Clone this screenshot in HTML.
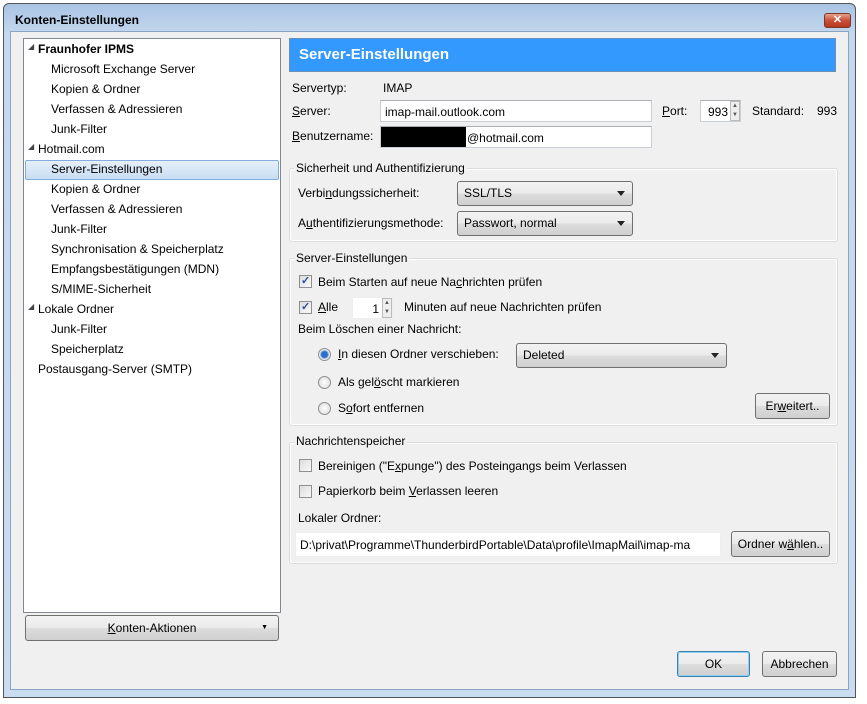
<!DOCTYPE html>
<html><head><meta charset="utf-8"><style>
*{box-sizing:border-box;margin:0;padding:0}
body{width:867px;height:704px;background:#fff;position:relative;font-family:"Liberation Sans",sans-serif;font-size:12px;color:#000;overflow:hidden}
.a{position:absolute;white-space:nowrap}
.win{position:absolute;left:3px;top:3px;width:853px;height:695px;background:linear-gradient(#a9c4e4,#c4d8ee 30px,#c9dcf0);border:1px solid #555;border-radius:6px 6px 0 0}
.cont{position:absolute;left:10px;top:31px;width:839px;height:659px;background:#f0f0f0;border:1px solid #8aa4c4}
.inp{position:absolute;background:#fff;border:1px solid #c9ced6;border-top-color:#abadb3}
.btn{position:absolute;border:1px solid #707070;border-radius:3px;background:linear-gradient(#f2f2f2,#ebebeb 50%,#dddddd 51%,#cfcfcf);text-align:center}
.sel{position:absolute;border:1px solid #707070;border-radius:3px;background:linear-gradient(#f2f2f2,#ebebeb 50%,#dddddd 51%,#cfcfcf);padding-left:6px;line-height:22px}
.sel:after{content:"";position:absolute;right:7px;top:9px;border:4px solid transparent;border-top:5px solid #222;border-bottom:0}
.grp{position:absolute;border:1px solid #dcdcdc;border-radius:3px;box-shadow:inset 0 0 0 1px #fff}
.lg{position:absolute;background:#f0f0f0;padding:0 2px}
.cb{position:absolute;width:13px;height:13px;border:1px solid #8f8f8f;background:linear-gradient(135deg,#dcdcdc,#fafafa)}
.cb.on:after{content:"✓";position:absolute;left:1px;top:-2px;font-size:11px;color:#2b4e9e;font-weight:bold}
.rd{position:absolute;width:13px;height:13px;border:1px solid #8f8f8f;border-radius:50%;background:radial-gradient(#fff,#d8d8d8)}
.rd.on{background:radial-gradient(#2a6fc9 0 3px,#9cc0ea 4px,#eee 5px)}
.tree div{position:absolute;white-space:nowrap}
u{text-decoration:underline}
</style></head><body>
<div class="win"></div>
<div class="a" style="left:15px;top:13px;font-weight:bold;font-size:12px">Konten-Einstellungen</div>
<div class="a" style="left:824px;top:13px;width:27px;height:15px;border:1px solid #7a3a2a;border-radius:3px;background:linear-gradient(#e8a08a,#c8503a 50%,#b8381f);color:#fff;font-size:11px;text-align:center;line-height:13px;font-weight:bold">✕</div>
<div class="cont"></div>

<div class="a tree" style="left:23px;top:38px;width:258px;height:575px;background:#fff;border:1px solid #828790">
<div style="left:1px;top:121px;width:254px;height:20px;background:linear-gradient(#e6f0fa,#c8ddf3);border:1px solid #84acdd;border-radius:2px"></div>
<div style="left:4px;top:3px;font-size:8px;color:#444">◢</div><div style="left:14px;top:3px;font-weight:bold">Fraunhofer IPMS</div>
<div style="left:27px;top:23px">Microsoft Exchange Server</div>
<div style="left:27px;top:43px">Kopien &amp; Ordner</div>
<div style="left:27px;top:63px">Verfassen &amp; Adressieren</div>
<div style="left:27px;top:83px">Junk-Filter</div>
<div style="left:4px;top:103px;font-size:8px;color:#444">◢</div><div style="left:14px;top:103px">Hotmail.com</div>
<div style="left:27px;top:123px">Server-Einstellungen</div>
<div style="left:27px;top:143px">Kopien &amp; Ordner</div>
<div style="left:27px;top:163px">Verfassen &amp; Adressieren</div>
<div style="left:27px;top:183px">Junk-Filter</div>
<div style="left:27px;top:203px">Synchronisation &amp; Speicherplatz</div>
<div style="left:27px;top:223px">Empfangsbestätigungen (MDN)</div>
<div style="left:27px;top:243px">S/MIME-Sicherheit</div>
<div style="left:4px;top:263px;font-size:8px;color:#444">◢</div><div style="left:14px;top:263px">Lokale Ordner</div>
<div style="left:27px;top:283px">Junk-Filter</div>
<div style="left:27px;top:303px">Speicherplatz</div>
<div style="left:14px;top:323px">Postausgang-Server (SMTP)</div>
</div>
<div class="btn" style="left:25px;top:615px;width:254px;height:26px;line-height:24px"><u>K</u>onten-Aktionen<span style="position:absolute;right:10px;font-size:7px">▼</span></div>

<div class="a" style="left:289px;top:38px;width:547px;height:34px;background:#3399ff;border:1px solid #6a8fb8;color:#fff;font-weight:bold;font-size:15px;line-height:32px;padding-left:9px">Server-Einstellungen</div>

<div class="a" style="left:292px;top:81px">Servertyp:</div>
<div class="a" style="left:383px;top:81px">IMAP</div>
<div class="a" style="left:292px;top:104px"><u>S</u>erver:</div>
<div class="inp" style="left:380px;top:100px;width:272px;height:22px;padding:4px 4px">imap-mail.outlook.com</div>
<div class="a" style="left:662px;top:104px"><u>P</u>ort:</div>
<div class="inp" style="left:700px;top:100px;width:41px;height:22px;padding:4px 12px 0 0;text-align:right">993</div>
<div class="a" style="left:730px;top:101px;width:10px;height:20px;border:1px solid #bbb;background:#eee;font-size:6px;line-height:9px;text-align:center;color:#555">▲<br>▼</div>
<div class="a" style="left:752px;top:104px">Standard:</div>
<div class="a" style="left:817px;top:104px">993</div>
<div class="a" style="left:292px;top:129px"><u>B</u>enutzername:</div>
<div class="inp" style="left:380px;top:126px;width:272px;height:22px;padding:4px 0 0 86px">@hotmail.com</div>
<div class="a" style="left:381px;top:127px;width:85px;height:20px;background:#000"></div>

<div class="grp" style="left:289px;top:168px;width:549px;height:74px"></div>
<div class="lg a" style="left:294px;top:161px">Sicherheit und Authentifizierung</div>
<div class="a" style="left:298px;top:186px">Verbi<u>n</u>dungssicherheit:</div>
<div class="sel" style="left:457px;top:181px;width:176px;height:25px">SSL/TLS</div>
<div class="a" style="left:298px;top:216px">A<u>u</u>thentifizierungsmethode:</div>
<div class="sel" style="left:457px;top:211px;width:176px;height:25px">Passwort, normal</div>

<div class="grp" style="left:289px;top:258px;width:549px;height:168px"></div>
<div class="lg a" style="left:294px;top:251px">Server-Einstellungen</div>
<div class="cb on" style="left:299px;top:275px"></div>
<div class="a" style="left:318px;top:275px">Beim Starten auf neue Na<u>c</u>hrichten prüfen</div>
<div class="cb on" style="left:299px;top:301px"></div>
<div class="a" style="left:318px;top:300px"><u>A</u>lle</div>
<div class="inp" style="left:352px;top:297px;width:41px;height:22px;padding:4px 13px 0 0;text-align:right;border-color:#eee">1</div>
<div class="a" style="left:382px;top:298px;width:10px;height:20px;border:1px solid #bbb;background:#eee;font-size:6px;line-height:9px;text-align:center;color:#555">▲<br>▼</div>
<div class="a" style="left:404px;top:300px">Minuten auf neue Nachrichten prüfen</div>
<div class="a" style="left:298px;top:322px">Beim Löschen einer Nachricht:</div>
<div class="rd on" style="left:318px;top:348px"></div>
<div class="a" style="left:338px;top:347px"><u>I</u>n diesen Ordner verschieben:</div>
<div class="sel" style="left:516px;top:343px;width:211px;height:25px">Deleted</div>
<div class="rd" style="left:318px;top:376px"></div>
<div class="a" style="left:338px;top:375px">Als gel<u>ö</u>scht markieren</div>
<div class="rd" style="left:318px;top:402px"></div>
<div class="a" style="left:338px;top:401px">S<u>o</u>fort entfernen</div>
<div class="btn" style="left:755px;top:393px;width:75px;height:26px;line-height:24px">Er<u>w</u>eitert..</div>

<div class="grp" style="left:289px;top:442px;width:549px;height:122px"></div>
<div class="lg a" style="left:294px;top:434px">Nachrichtenspeicher</div>
<div class="cb" style="left:299px;top:459px"></div>
<div class="a" style="left:318px;top:459px">Bereinigen ("E<u>x</u>punge") des Posteingangs beim Verlassen</div>
<div class="cb" style="left:299px;top:485px"></div>
<div class="a" style="left:318px;top:484px">Papierkorb beim <u>V</u>erlassen leeren</div>
<div class="a" style="left:298px;top:511px">Lokaler Ordner:</div>
<div class="inp" style="left:295px;top:532px;width:426px;height:25px;padding:5px 4px;overflow:hidden;border-color:#eee">D:\privat\Programme\ThunderbirdPortable\Data\profile\ImapMail\imap-ma</div>
<div class="btn" style="left:731px;top:531px;width:99px;height:26px;line-height:24px">Ordner w<u>ä</u>hlen..</div>

<div class="btn" style="left:677px;top:651px;width:73px;height:26px;line-height:24px;border-color:#3c7fb1;box-shadow:inset 0 0 0 1px #8fd0f0">OK</div>
<div class="btn" style="left:762px;top:651px;width:75px;height:26px;line-height:24px">Abbrechen</div>
</body></html>
